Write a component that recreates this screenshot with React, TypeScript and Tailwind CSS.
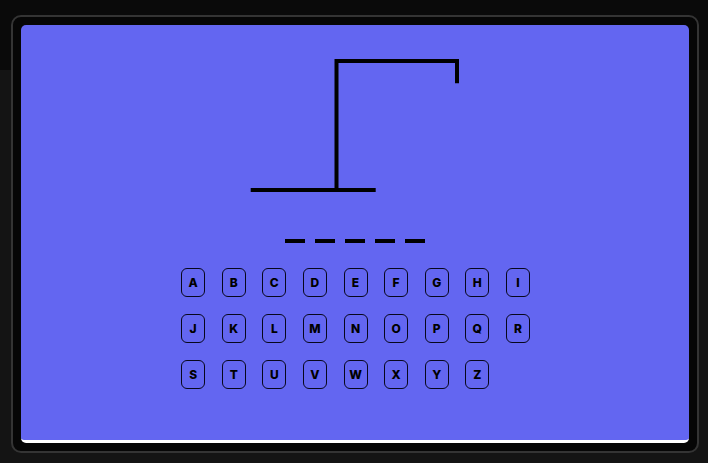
const LETTERS = "ABCDEFGHIJKLMNOPQRSTUVWXYZ".split("");

const Gallows = () => (
  <svg width="210" height="137" viewBox="0 0 210 137" fill="none">
    <path d="M0.7 133 H125.7" stroke="#000" strokeWidth="4" />
    <path
      d="M86.5 133 V4 H207 V26.3"
      stroke="#000"
      strokeWidth="4"
      strokeLinejoin="miter"
    />
  </svg>
);

export default function App() {
  return (
    <div className="w-[708px] h-[463px] overflow-hidden bg-[linear-gradient(#0a0a0a_70px,#141414_70px)] pl-[11px] pt-[15px] font-['Inter',sans-serif]">
      {/* modal frame */}
      <div className="w-[688px] h-[438px] rounded-[10px] border-2 border-[#343434] bg-[#060606] p-[8px]">
        <div className="h-full rounded-[5px] bg-[#6366f1] border-b-[3px] border-white flex flex-col items-center pt-[32px]">
          <Gallows />

          {/* word slots */}
          <div className="flex gap-[10px] mt-[45px]">
            {[0, 1, 2, 3, 4].map((i) => (
              <div key={i} className="w-5 h-1 bg-black" />
            ))}
          </div>

          {/* keyboard */}
          <div className="grid grid-cols-9 gap-x-[16.6px] gap-y-[17px] mt-[25px] ml-[1px]">
            {LETTERS.map((l) => (
              <button
                key={l}
                className="w-[24px] h-[29px] rounded-[6px] border-[1.3px] border-[#07071c] flex items-center justify-center text-[12px] font-extrabold text-black leading-none"
              >
                {l}
              </button>
            ))}
          </div>
        </div>
      </div>
    </div>
  );
}
